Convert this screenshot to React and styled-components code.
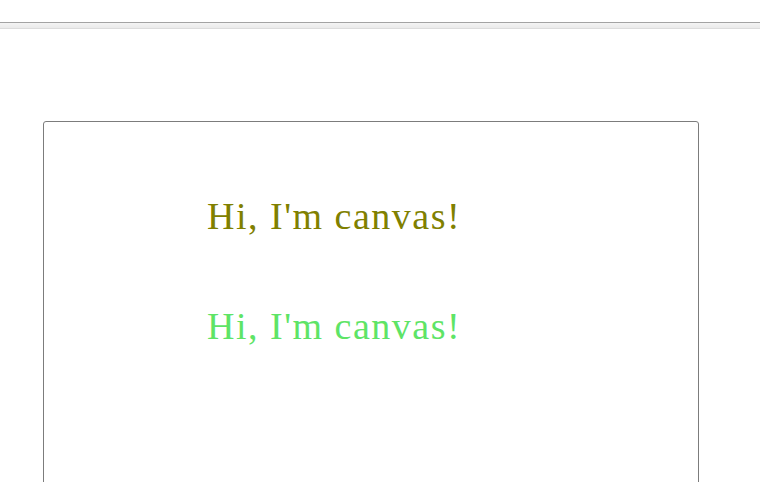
import React from 'react';
import styled, { createGlobalStyle } from 'styled-components';

const GlobalStyle = createGlobalStyle`
    html, body {
        margin: 0;
        padding: 0;
        background: #ffffff;
        overflow: hidden;
    }
`

const Page = styled.div`
    display: flex;
    flex-direction: column;
    padding-top: 22px;
`

const Divider = styled.div`
    height: 5px;
    border-top: 1px solid #a3a3a3;
    border-bottom: 1px solid #dcdcdc;
    background: linear-gradient(#f4f4f4, #eaeaea);
`

const Canvas = styled.div`
    box-sizing: border-box;
    width: 656px;
    height: 420px;
    margin: 92px 0 0 43px;
    padding: 74px 0 0 163px;
    border: 1px solid #7c7c7c;
    border-radius: 3px;
    display: flex;
    flex-direction: column;
    gap: 70px;
`

const Greeting = styled.span`
    font-family: "Liberation Serif", "Times New Roman", serif;
    font-size: 38px;
    line-height: 40px;
    letter-spacing: 1.5px;
    white-space: nowrap;
    color: ${props => props.color};
`

const App = () => {
    const lines = [
        { text: "Hi, I'm canvas!", color: '#808000' },
        { text: "Hi, I'm canvas!", color: '#5ee466' },
    ]

    return (
        <>
            <GlobalStyle />
            <Page>
                <Divider />
                <Canvas>
                    {lines.map((line, i) => (
                        <Greeting key={i} color={line.color}>{line.text}</Greeting>
                    ))}
                </Canvas>
            </Page>
        </>
    )
}

export default App;
